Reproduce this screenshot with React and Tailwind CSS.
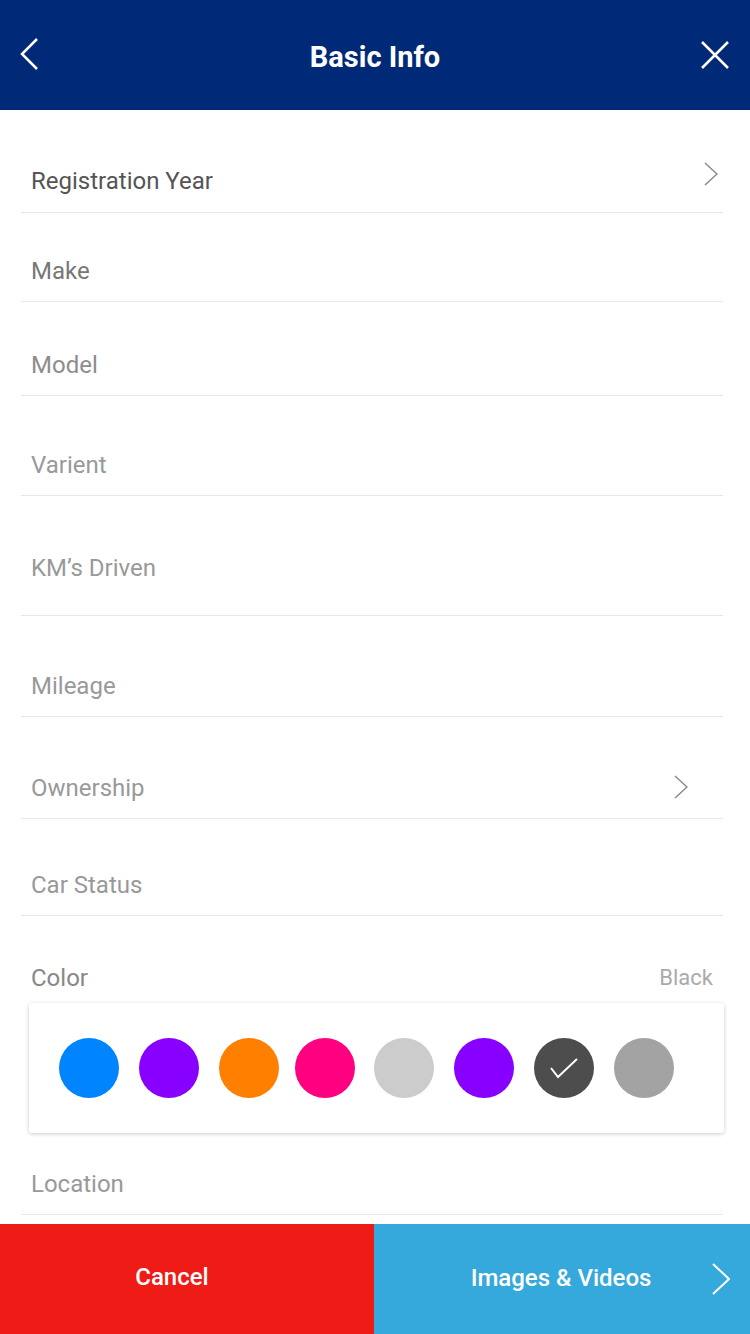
import React from "react";

const Chevron = ({ className = "", color = "#888", w = 14, h = 24, sw = 1.5 }) => (
  <svg width={w} height={h} viewBox={`0 0 ${w} ${h}`} className={className} fill="none">
    <polyline points={`1,1 ${w - 1},${h / 2} 1,${h - 1}`} stroke={color} strokeWidth={sw} strokeLinejoin="miter" />
  </svg>
);

const Row = ({ label, h, pb = "pb-[16px]", color = "text-[#999]", chevron, chevronClass = "" }) => (
  <div className={`ml-[21px] mr-[27px] flex items-end justify-between border-b border-[#e8e8e8] ${h} ${pb}`}>
    <span className={`pl-[10px] text-[24px] leading-[28px] ${color}`}>{label}</span>
    {chevron && <Chevron className={chevronClass} color="#8a8a8a" />}
  </div>
);

const colors = [
  { c: "#0084ff", m: "" },
  { c: "#8800ff", m: "ml-[20px]" },
  { c: "#ff8000", m: "ml-[20px]" },
  { c: "#ff0080", m: "ml-[16px]" },
  { c: "#cccccc", m: "ml-[19px]" },
  { c: "#8800ff", m: "ml-[20px]" },
  { c: "#4d4d4d", m: "ml-[20px]" },
  { c: "#a3a3a3", m: "ml-[20px]" },
];

export default function App() {
  return (
    <div className="relative h-[1334px] w-[750px] overflow-hidden bg-white" style={{ fontFamily: "Roboto, 'Noto Sans', sans-serif" }}>
      <header className="flex h-[110px] items-center justify-between bg-[#002a77] px-[20px]">
        <div className="flex w-[40px] justify-start">
          <svg width="20" height="34" viewBox="0 0 20 34" fill="none" className="mt-[-2px]">
            <polyline points="17,2 2,17 17,32" stroke="white" strokeWidth="2.5" />
          </svg>
        </div>
        <h1 className="mt-[6px] text-[29px] font-bold text-white">Basic Info</h1>
        <div className="flex w-[40px] justify-end">
          <svg width="30" height="30" viewBox="0 0 30 30" fill="none">
            <path d="M2 2L28 28M28 2L2 28" stroke="white" strokeWidth="2.5" />
          </svg>
        </div>
      </header>

      <Row label="Registration Year" h="h-[103px]" color="text-[#555]" pb="pb-[17px]" chevron chevronClass="mb-[9px] mr-[5px]" />
      <Row label="Make" h="h-[89px]" color="text-[#777]" />
      <Row label="Model" h="h-[94px]" color="text-[#8d8d8d]" />
      <Row label="Varient" h="h-[100px]" />
      <Row label="KM’s Driven" h="h-[120px]" pb="pb-[33px]" />
      <Row label="Mileage" h="h-[101px]" />
      <Row label="Ownership" h="h-[102px]" chevron chevronClass="mb-[3px] mr-[35px]" />
      <Row label="Car Status" h="h-[97px]" />

      <div className="ml-[21px] mr-[27px] flex h-[86px] items-end justify-between pb-[10px]">
        <span className="pl-[10px] text-[24px] leading-[28px] text-[#888]">Color</span>
        <span className="pr-[10px] text-[22px] leading-[28px] text-[#aaa]">Black</span>
      </div>

      <div className="mx-[29px] mt-[1px] flex h-[130px] w-[695px] items-center rounded-[3px] bg-white pl-[30px] shadow-[0_1px_4px_rgba(0,0,0,0.2)]">
        {colors.map((o, i) => (
          <div key={i} className={`flex h-[60px] w-[60px] shrink-0 items-center justify-center rounded-full ${o.m}`} style={{ backgroundColor: o.c }}>
            {i === 6 && (
              <svg width="32" height="24" viewBox="0 0 32 24" fill="none">
                <polyline points="3,12 10,21 29,3" stroke="white" strokeWidth="2" />
              </svg>
            )}
          </div>
        ))}
      </div>

      <Row label="Location" h="h-[82px]" />

      <div className="absolute bottom-0 left-0 flex h-[110px] w-[750px]">
        <button className="flex h-full w-[374px] items-center justify-center bg-[#ee1b16] pb-[4px] pr-[30px] text-[24px] font-medium text-white">
          Cancel
        </button>
        <button className="relative flex h-full w-[376px] items-center justify-center bg-[#35a9dc] text-[24px] font-medium text-white">
          <span className="mb-[2px] mr-[2px]">Images &amp; Videos</span>
          <Chevron className="absolute right-[20px] top-[39px]" color="white" w={18} h={32} sw={2} />
        </button>
      </div>
    </div>
  );
}
